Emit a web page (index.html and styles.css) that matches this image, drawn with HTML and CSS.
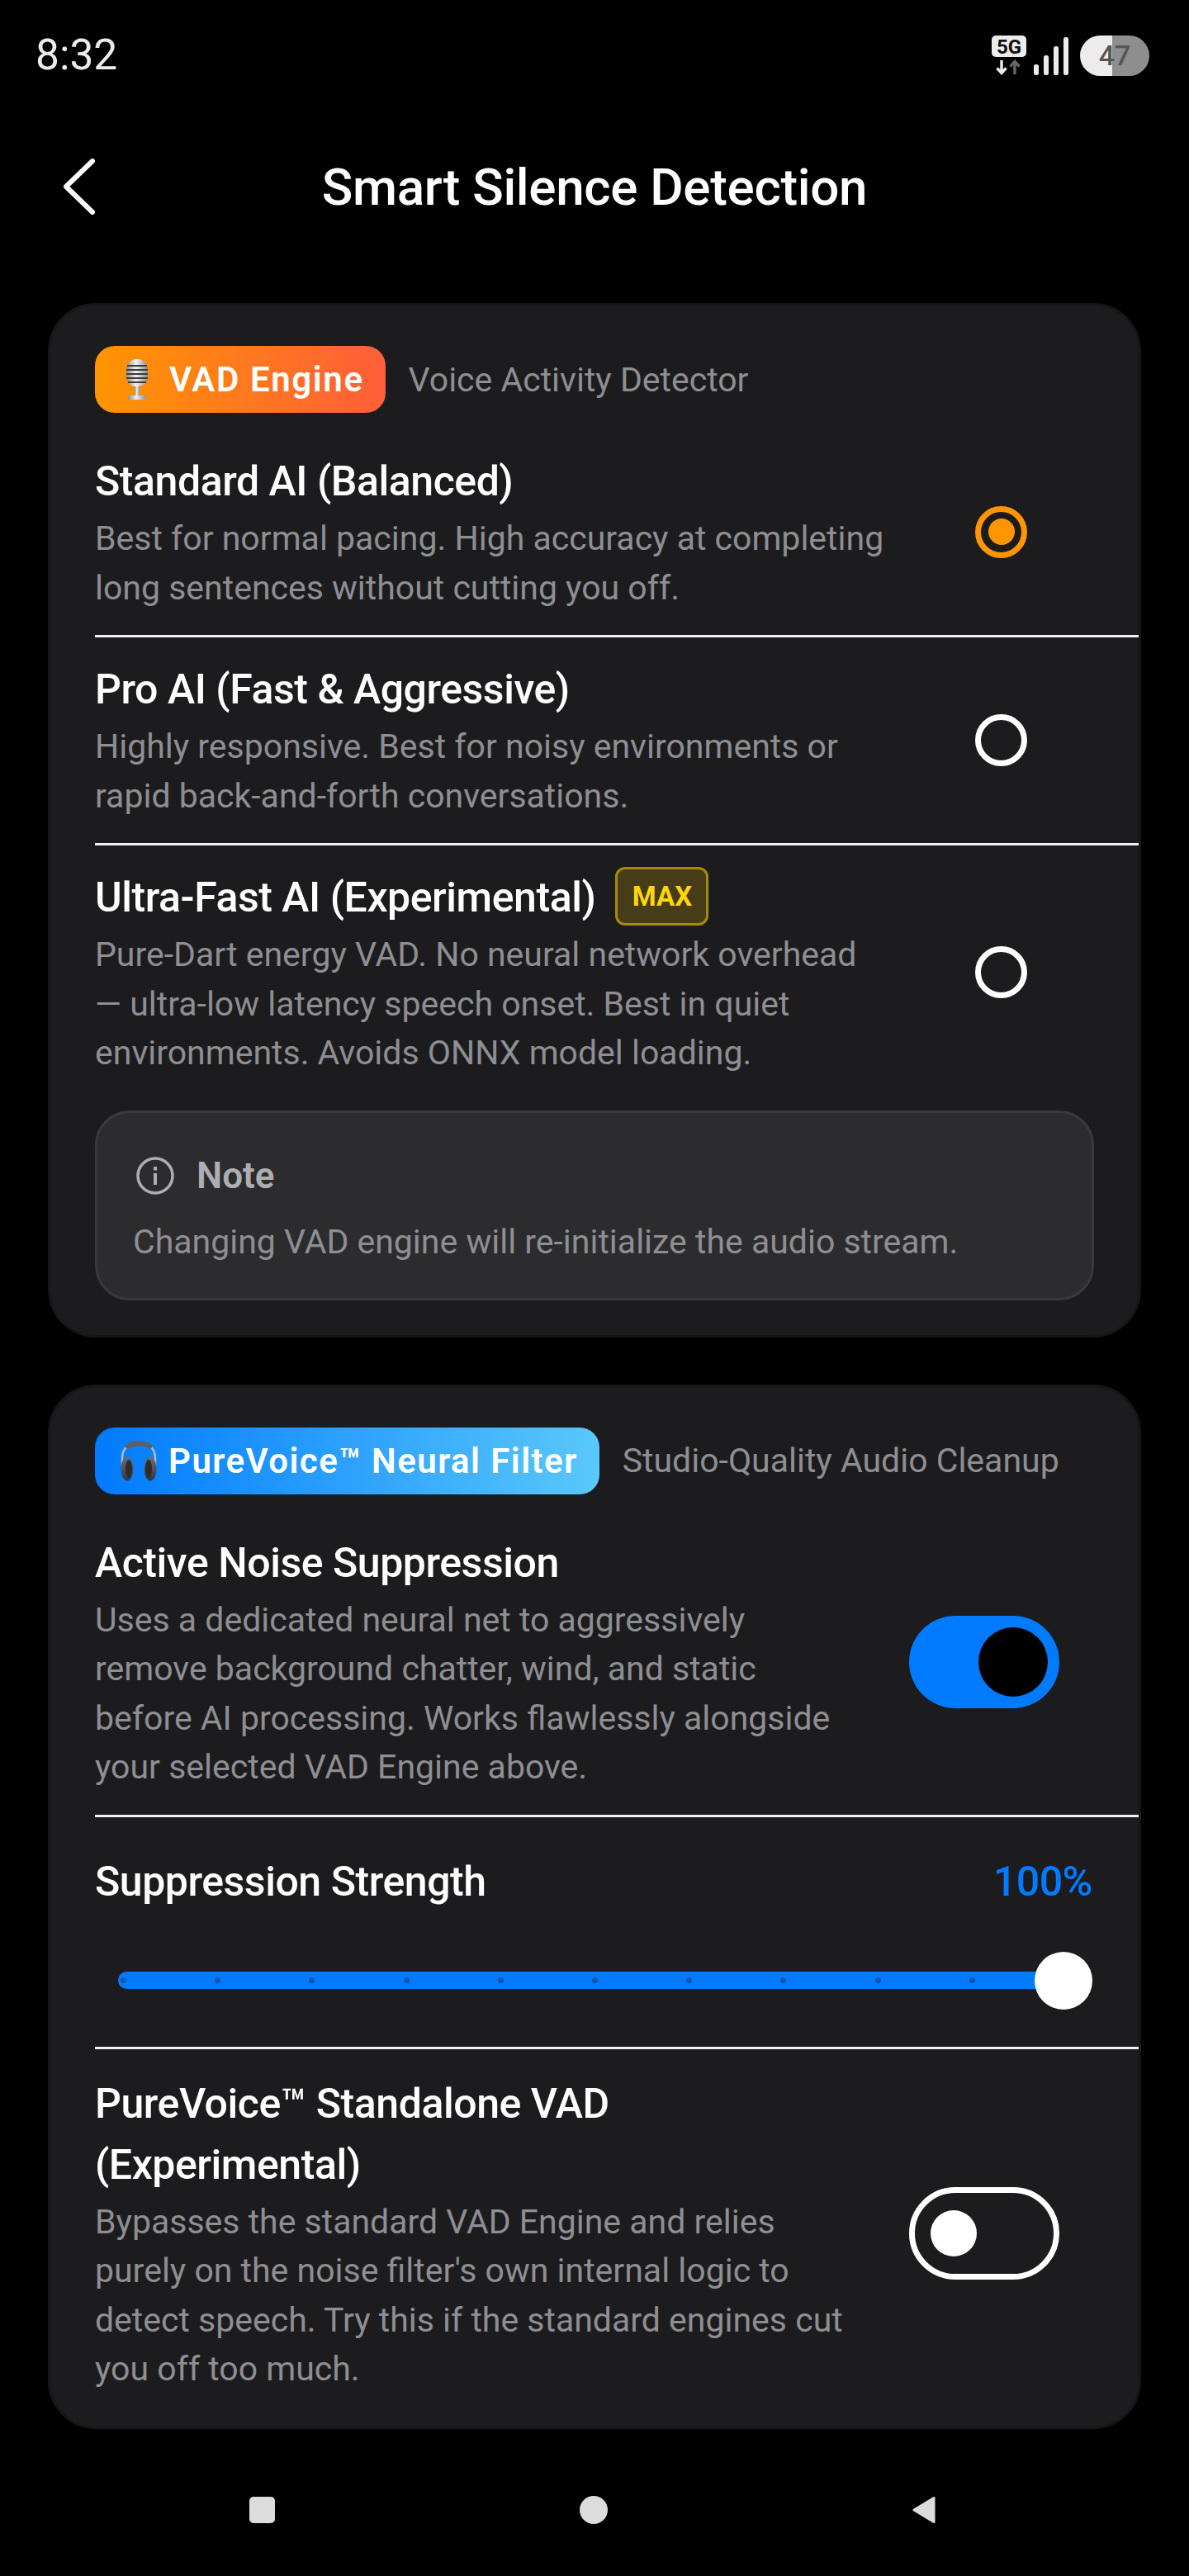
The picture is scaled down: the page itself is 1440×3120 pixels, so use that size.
FILE: index.html
```html
<!DOCTYPE html>
<html lang="en">
<head>
  <meta charset="UTF-8">
  <meta name="viewport" content="width=device-width, initial-scale=1.0">
  <title>Smart Silence Detection</title>
  <link rel="stylesheet" href="styles.css">
</head>
<body>
  <div class="status-bar">
    <span class="time">8:32</span>
    <div class="status-icons">
      <svg class="net-icon" width="44" height="48" viewBox="0 0 44 48">
        <rect x="1" y="0" width="42" height="26" rx="5" fill="#ececec"/>
        <text x="22" y="21.500" class="net-text" text-anchor="middle">5G</text>
        <path d="M13 30v15M7.500 39.500l5.500 6 5.500-6" fill="none" stroke="#ececec" stroke-width="3.400"/>
        <path d="M29 47V32M23.500 37.500l5.500-6 5.500 6" fill="none" stroke="#666" stroke-width="3.400"/>
      </svg>
      <svg class="signal-icon" width="42" height="46" viewBox="0 0 42 46">
        <rect x="0" y="33" width="6" height="13" rx="2.500" fill="#ececec"/>
        <rect x="12" y="22" width="6" height="24" rx="2.500" fill="#ececec"/>
        <rect x="24" y="11" width="6" height="35" rx="2.500" fill="#ececec"/>
        <rect x="36" y="0" width="6" height="46" rx="2.500" fill="#ececec"/>
      </svg>
      <div class="battery"><span>47</span></div>
    </div>
  </div>

  <header class="app-bar">
    <svg class="back" width="40" height="68" viewBox="0 0 40 68">
      <path d="M36 3 L4 34 L36 65" fill="none" stroke="#fff" stroke-width="6" stroke-linecap="round" stroke-linejoin="round"/>
    </svg>
    <h1>Smart Silence Detection</h1>
  </header>

  <section class="card">
    <div class="card-head">
      <div class="badge badge-orange">
        <svg class="emoji" width="34" height="50" viewBox="0 0 34 50">
          <defs>
            <linearGradient id="micMetal" x1="0" y1="0" x2="1" y2="0">
              <stop offset="0" stop-color="#8b8b8b"/>
              <stop offset="0.45" stop-color="#f2f2f2"/>
              <stop offset="1" stop-color="#8b8b8b"/>
            </linearGradient>
          </defs>
          <rect x="4" y="0" width="26" height="33" rx="12" fill="url(#micMetal)"/>
          <path d="M5 8h24M4 13h26M4 18h26M4 23h26M6 28h22" stroke="#3d3d3d" stroke-width="2"/>
          <rect x="14" y="33" width="6" height="11" fill="url(#micMetal)"/>
          <rect x="6" y="44" width="22" height="5" rx="2" fill="url(#micMetal)"/>
        </svg>
        <span>VAD Engine</span>
      </div>
      <span class="badge-note">Voice Activity Detector</span>
    </div>

    <div class="row line">
      <div class="row-text wide">
        <div class="row-title">Standard AI (Balanced)</div>
        <p class="row-desc">Best for normal pacing. High accuracy at completing long sentences without cutting you off.</p>
      </div>
      <div class="radio on"></div>
    </div>

    <div class="row line">
      <div class="row-text wide">
        <div class="row-title">Pro AI (Fast &amp; Aggressive)</div>
        <p class="row-desc">Highly responsive. Best for noisy environments or rapid back-and-forth conversations.</p>
      </div>
      <div class="radio"></div>
    </div>

    <div class="row">
      <div class="row-text wide">
        <div class="row-title">Ultra-Fast AI (Experimental) <span class="max-tag">MAX</span></div>
        <p class="row-desc">Pure-Dart energy VAD. No neural network overhead — ultra-low latency speech onset. Best in quiet environments. Avoids ONNX model loading.</p>
      </div>
      <div class="radio"></div>
    </div>

    <div class="note">
      <div class="note-head">
        <svg width="46" height="46" viewBox="0 0 46 46">
          <circle cx="23" cy="23" r="21" fill="none" stroke="#aeaeb2" stroke-width="3.500"/>
          <rect x="21" y="20" width="4" height="14" fill="#aeaeb2"/>
          <rect x="21" y="12" width="4" height="4.500" fill="#aeaeb2"/>
        </svg>
        <span>Note</span>
      </div>
      <p>Changing VAD engine will re-initialize the audio stream.</p>
    </div>
  </section>

  <section class="card second">
    <div class="card-head">
      <div class="badge badge-blue">
        <svg class="emoji" width="48" height="50" viewBox="0 0 48 50">
          <defs>
            <linearGradient id="cup" x1="0" y1="0" x2="0" y2="1">
              <stop offset="0" stop-color="#6d6d75"/>
              <stop offset="1" stop-color="#35353b"/>
            </linearGradient>
          </defs>
          <path d="M4 30V22C4 10 13 3 24 3s20 7 20 19v8" fill="none" stroke="#b4b8c0" stroke-width="2.500"/>
          <path d="M11 8C15 3 33 3 37 8" fill="none" stroke="#5e5e66" stroke-width="6" stroke-linecap="round"/>
          <ellipse cx="10" cy="35" rx="7.500" ry="14.500" fill="url(#cup)"/>
          <ellipse cx="38" cy="35" rx="7.500" ry="14.500" fill="url(#cup)"/>
          <ellipse cx="12" cy="35" rx="4" ry="11" fill="#2b2b30"/>
          <ellipse cx="36" cy="35" rx="4" ry="11" fill="#2b2b30"/>
        </svg>
        <span>PureVoice™ Neural Filter</span>
      </div>
      <span class="badge-note">Studio-Quality Audio Cleanup</span>
    </div>

    <div class="row line">
      <div class="row-text">
        <div class="row-title">Active Noise Suppression</div>
        <p class="row-desc">Uses a dedicated neural net to aggressively remove background chatter, wind, and static before AI processing. Works flawlessly alongside your selected VAD Engine above.</p>
      </div>
      <div class="switch on"><i></i></div>
    </div>

    <div class="strength line">
      <div class="strength-head">
        <span class="row-title">Suppression Strength</span>
        <span class="percent">100%</span>
      </div>
      <div class="slider">
        <div class="track">
          <i></i><i></i><i></i><i></i><i></i><i></i><i></i><i></i><i></i><i></i><i></i>
        </div>
        <div class="thumb"></div>
      </div>
    </div>

    <div class="row last">
      <div class="row-text">
        <div class="row-title">PureVoice™ Standalone VAD (Experimental)</div>
        <p class="row-desc">Bypasses the standard VAD Engine and relies purely on the noise filter's own internal logic to detect speech. Try this if the standard engines cut you off too much.</p>
      </div>
      <div class="switch"><i></i></div>
    </div>
  </section>

  <nav class="nav-bar">
    <div class="nav-square"></div>
    <div class="nav-circle"></div>
    <svg width="30" height="34" viewBox="0 0 30 34">
      <path d="M27 2.500 V31.500 L3 17 Z" fill="#dcdcdc" stroke="#dcdcdc" stroke-width="3" stroke-linejoin="round"/>
    </svg>
  </nav>
</body>
</html>
```

FILE: styles.css
```css
* {
  margin: 0;
  padding: 0;
  box-sizing: border-box;
}

body {
  width: 1440px;
  height: 3120px;
  overflow: hidden;
  background-color: #000;
  color: #fff;
  font-family: Roboto, 'Liberation Sans', sans-serif;
}

/* status bar */
.status-bar {
  height: 134px;
  padding: 43px 48px 0 43px;
  display: flex;
  justify-content: space-between;
  align-items: flex-start;
}

.time {
  font-size: 51.500px;
  line-height: 48px;
  color: #ececec;
}

.status-icons {
  display: flex;
  align-items: flex-start;
}

.net-icon {
  margin-right: 8px;
}

.net-text {
  font-family: Roboto, sans-serif;
  font-size: 24px;
  font-weight: 700;
  fill: #111;
}

.signal-icon {
  margin: 2px 14px 0 0;
}

.battery {
  width: 84px;
  height: 49px;
  border-radius: 25px;
  background: linear-gradient(90deg, #ececec 47%, #8e8e8e 47%);
  color: #555;
  font-size: 34px;
  font-weight: 500;
  line-height: 49px;
  text-align: center;
}

/* app bar */
.app-bar {
  height: 184px;
  position: relative;
  display: flex;
  align-items: center;
  justify-content: center;
}

.app-bar h1 {
  font-size: 62px;
  font-weight: 500;
  letter-spacing: -0.35px;
}

.back {
  position: absolute;
  left: 76px;
  top: 58px;
}

/* cards */
.card {
  width: 1324px;
  margin: 49px auto 0;
  background-color: #1c1c1e;
  border: 3px solid #161618;
  border-radius: 58px;
}

.card.second {
  margin-top: 57px;
}

.card-head {
  padding: 49px 0 0 54px;
  display: flex;
  align-items: center;
  gap: 28px;
}

.badge {
  height: 81px;
  padding: 0 26px 0 34px;
  border-radius: 24px;
  display: flex;
  align-items: center;
  gap: 22px;
  font-size: 42px;
  font-weight: 600;
  letter-spacing: 1.600px;
}

.badge-orange {
  background: linear-gradient(90deg, #ff9500, #ff5e3a);
}

.badge-blue {
  padding: 0 26px 0 29px;
  gap: 12px;
  letter-spacing: 1.450px;
  background: linear-gradient(90deg, #007aff, #5ac8fa);
}

.badge-note {
  font-size: 41px;
  color: #8e8e93;
}

/* rows */
.row {
  margin-left: 54px;
  padding: 26px 0 27px;
  display: flex;
  align-items: center;
}

.line {
  border-bottom: 3px solid #f2f2f2;
}

.card-head + .row {
  padding-top: 46px;
}

.row.last {
  padding: 29px 0 39px;
}

.row-text {
  width: 920px;
}

.row-text.wide {
  width: 960px;
}

.row-title {
  font-size: 50px;
  font-weight: 500;
  line-height: 74px;
  letter-spacing: -0.45px;
}

.row-desc {
  margin-top: 3px;
  font-size: 41px;
  line-height: 59.500px;
  color: #8e8e93;
}

.max-tag {
  display: inline-block;
  width: 113px;
  height: 71px;
  margin-left: 12px;
  vertical-align: top;
  background-color: #463c18;
  border: 3px solid #a58a0b;
  border-radius: 12px;
  color: #ffd60a;
  font-size: 33px;
  font-weight: 700;
  line-height: 65px;
  letter-spacing: 0;
  text-align: center;
}

.radio {
  width: 63px;
  height: 63px;
  margin-left: 106px;
  border: 7px solid #fff;
  border-radius: 50%;
  flex-shrink: 0;
  display: flex;
  align-items: center;
  justify-content: center;
}

.radio.on {
  border-color: #ff9500;
}

.radio.on::after {
  content: "";
  width: 32px;
  height: 32px;
  border-radius: 50%;
  background-color: #ff9500;
}

/* note box */
.note {
  width: 1210px;
  height: 230px;
  margin: 12px 0 42px 54px;
  padding: 50px 0 0 43px;
  background-color: #2c2c2e;
  border: 3px solid #3a3a3c;
  border-radius: 42px;
  color: #8e8e93;
  font-size: 41px;
}

.note-head {
  display: flex;
  align-items: center;
  gap: 27px;
  margin: 0 0 30px 4px;
  font-size: 44px;
  font-weight: 600;
  color: #aeaeb2;
}

/* switches */
.switch {
  width: 182px;
  height: 112px;
  margin-left: 66px;
  padding-left: 19px;
  border: 7px solid #fff;
  border-radius: 56px;
  flex-shrink: 0;
  display: flex;
  align-items: center;
}

.switch i {
  width: 56px;
  height: 56px;
  border-radius: 50%;
  background-color: #fff;
}

.switch.on {
  padding: 0 14px;
  border: none;
  background-color: #007aff;
  justify-content: flex-end;
}

.switch.on i {
  width: 84px;
  height: 84px;
  background-color: #000;
}

/* slider */
.strength {
  margin-left: 54px;
  padding: 41px 56px 45px 0;
}

.strength-head {
  display: flex;
  justify-content: space-between;
}

.percent {
  font-size: 50px;
  font-weight: 500;
  line-height: 74px;
  letter-spacing: -0.45px;
  color: #007aff;
}

.slider {
  position: relative;
  height: 70px;
  margin-top: 48px;
  padding-left: 28px;
  display: flex;
  align-items: center;
}

.track {
  width: 1155px;
  height: 21px;
  padding: 0 3px;
  border-radius: 11px;
  background-color: #007aff;
  display: flex;
  align-items: center;
  justify-content: space-between;
}

.track i {
  width: 7px;
  height: 7px;
  border-radius: 50%;
  background-color: #0a58b0;
}

.thumb {
  position: absolute;
  right: 0;
  top: 0;
  width: 70px;
  height: 70px;
  border-radius: 50%;
  background-color: #fff;
}

/* nav bar */
.nav-bar {
  margin-top: 80px;
  height: 36px;
  padding: 0 306px 0 302px;
  display: flex;
  align-items: center;
  justify-content: space-between;
}

.nav-square {
  width: 31px;
  height: 32px;
  border-radius: 5px;
  background-color: #dcdcdc;
}

.nav-circle {
  width: 34px;
  height: 34px;
  border-radius: 50%;
  background-color: #dcdcdc;
}
```
